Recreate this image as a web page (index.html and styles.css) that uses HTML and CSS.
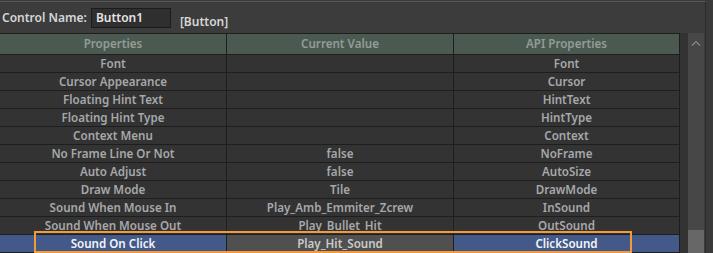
FILE: index.html
```html
<!DOCTYPE html>
<html lang="en">
<head>
    <meta charset="UTF-8">
    <title>Control Properties</title>
    <link rel="stylesheet" href="styles.css">
</head>
<body>
    <div id="panel">
        <div class="name_bar">
            <span class="label">Control Name:</span>
            <div class="name_box">Button1</div>
            <span class="type">[Button]</span>
        </div>
        <div class="grid_wrap">
            <div class="prop_table">
                <div class="row head">
                    <div class="cell">Properties</div>
                    <div class="cell">Current Value</div>
                    <div class="cell">API Properties</div>
                </div>
                <div class="row"><div class="cell">Font</div><div class="cell"></div><div class="cell">Font</div></div>
                <div class="row"><div class="cell">Cursor Appearance</div><div class="cell"></div><div class="cell">Cursor</div></div>
                <div class="row"><div class="cell">Floating Hint Text</div><div class="cell"></div><div class="cell">HintText</div></div>
                <div class="row"><div class="cell">Floating Hint Type</div><div class="cell"></div><div class="cell">HintType</div></div>
                <div class="row"><div class="cell">Context Menu</div><div class="cell"></div><div class="cell">Context</div></div>
                <div class="row"><div class="cell">No Frame Line Or Not</div><div class="cell">false</div><div class="cell">NoFrame</div></div>
                <div class="row"><div class="cell">Auto Adjust</div><div class="cell">false</div><div class="cell">AutoSize</div></div>
                <div class="row"><div class="cell">Draw Mode</div><div class="cell">Tile</div><div class="cell">DrawMode</div></div>
                <div class="row"><div class="cell">Sound When Mouse In</div><div class="cell">Play_Amb_Emmiter_Zcrew</div><div class="cell">InSound</div></div>
                <div class="row"><div class="cell">Sound When Mouse Out</div><div class="cell">Play_Bullet_Hit</div><div class="cell">OutSound</div></div>
                <div class="row selected"><div class="cell">Sound On Click</div><div class="cell">Play_Hit_Sound</div><div class="cell">ClickSound</div></div>
                <div class="focus_box"></div>
            </div>
            <div class="gutter"></div>
            <div class="scrollbar">
                <svg class="arrow" width="10" height="6" viewBox="0 0 10 6"><path d="M1 5.5 L5 1.5 L9 5.5" fill="none" stroke="#8a8a8a" stroke-width="1.2"/></svg>
                <div class="thumb"></div>
            </div>
        </div>
    </div>
</body>
</html>
```

FILE: styles.css
```css
body{
    margin: 0;
    background: #3a3a3a;
    font-family: "Noto Sans", "DejaVu Sans", sans-serif;
    font-size: 11.6px;
    overflow: hidden;
}
#panel{
    width: 705px;
    height: 252px;
    margin-top: 1px;
    border-top: 1px solid #595959;
    border-right: 1px solid #2c2c2c;
    background: #3c3c3c;
}
.name_bar{
    display: flex;
    align-items: center;
    height: 31px;
    padding-left: 2px;
    color: #d6d6d6;
    font-weight: 600;
    font-size: 12px;
}
.name_box{
    width: 74px;
    height: 18px;
    margin-left: 4px;
    padding-left: 4px;
    line-height: 18px;
    background: #2f2f2f;
    border: 1px solid #1c1c1c;
    color: #e4e4e4;
}
.type{
    margin-left: 9px;
    margin-top: 8px;
}
.grid_wrap{
    display: flex;
}
.prop_table{
    position: relative;
    width: 680px;
    border-top: 1px solid #1e1e1e;
}
.row{
    display: flex;
    height: 17px;
    border-bottom: 1px solid #1e1e1e;
    background: #333333;
    color: #a6a8aa;
    font-weight: 600;
}
.cell{
    width: 226px;
    border-right: 1px solid #1e1e1e;
    text-align: center;
    line-height: 17px;
    white-space: nowrap;
}
.cell:last-child{
    width: 225px;
}
.head{
    height: 20px;
    background: #4b5a51;
    color: #949c97;
}
.head .cell{
    line-height: 20px;
}
.selected{
    color: #f2f4f8;
    background: #43598a;
}
.selected .cell:nth-child(2){
    background: #505050;
    color: #cacaca;
}
.focus_box{
    position: absolute;
    left: 34px;
    top: 197px;
    width: 594px;
    height: 18px;
    border: 2px solid #f39a3c;
}
.gutter{
    width: 8px;
    background: #333333;
}
.scrollbar{
    position: relative;
    width: 16px;
    height: 221px;
    background: #474747;
}
.arrow{
    position: absolute;
    left: 3px;
    top: 7px;
}
.thumb{
    position: absolute;
    left: 0;
    right: 0;
    bottom: 0;
    height: 24px;
    background: #676767;
}
```
